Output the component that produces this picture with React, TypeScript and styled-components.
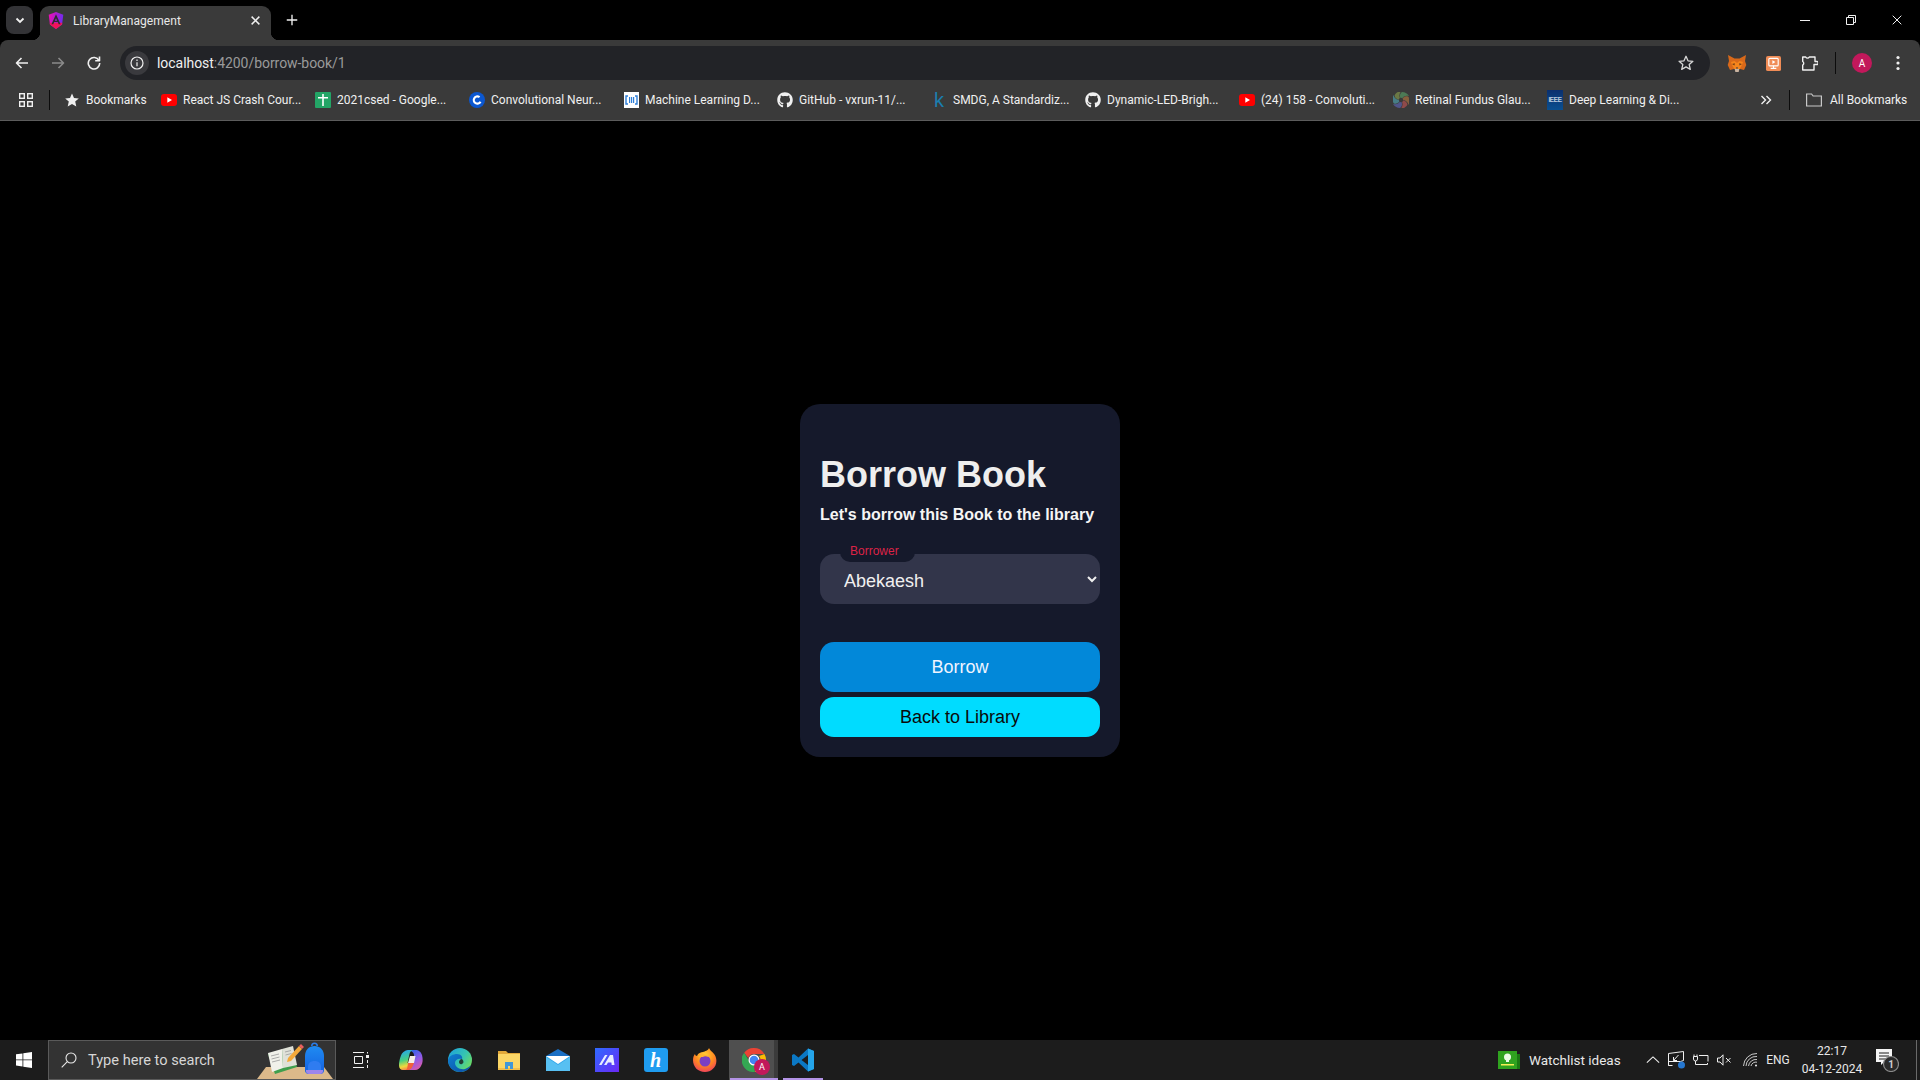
import React from "react";
import styled, { createGlobalStyle } from "styled-components";
import { FaGithub } from "react-icons/fa";

const Global = createGlobalStyle`
  html, body { margin: 0; padding: 0; background: #000; }
  * { box-sizing: border-box; }
`;

const uiFont = `Roboto, "Noto Sans", sans-serif`;
const pageFont = `"Liberation Sans", Arial, sans-serif`;

const Page = styled.div`
  width: 1920px;
  height: 1080px;
  display: flex;
  flex-direction: column;
  background: #000;
  overflow: hidden;
  font-family: ${uiFont};
`;

const TabStrip = styled.div`
  height: 40px;
  display: flex;
  align-items: flex-end;
  padding-left: 6px;
`;
const TabSearch = styled.div`
  width: 27px;
  height: 28px;
  margin-bottom: 6px;
  border-radius: 8px;
  background: #333336;
  display: flex;
  align-items: center;
  justify-content: center;
`;
const Tab = styled.div`
  position: relative;
  width: 231px;
  height: 34px;
  margin-left: 7px;
  padding: 0 11px 5px 8px;
  background: #3a3a3a;
  border-radius: 9px 9px 0 0;
  display: flex;
  align-items: center;
  gap: 9px;
  color: #e8e8e8;
  font-size: 12px;
  &::before, &::after {
    content: "";
    position: absolute;
    bottom: 0;
    width: 8px;
    height: 8px;
  }
  &::before { left: -8px; background: radial-gradient(circle at 0 0, transparent 8px, #3a3a3a 8.5px); }
  &::after { right: -8px; background: radial-gradient(circle at 100% 0, transparent 8px, #3a3a3a 8.5px); }
`;
const TabTitle = styled.span`
  flex: 1;
  white-space: nowrap;
  letter-spacing: 0.05px;
`;
const NewTab = styled.div`
  width: 28px;
  height: 34px;
  margin-left: 7px;
  display: flex;
  align-items: center;
  justify-content: center;
  padding-bottom: 6px;
`;
const WindowControls = styled.div`
  margin-left: auto;
  align-self: flex-start;
  display: flex;
`;
const WindowButton = styled.div`
  width: 46px;
  height: 40px;
  display: flex;
  align-items: center;
  justify-content: center;
`;

const Toolbar = styled.div`
  height: 40px;
  padding: 6px 4px 0 4px;
  background: #3a3a3a;
  border-radius: 8px 8px 0 0;
  display: flex;
  align-items: flex-start;
`;
const ToolSlot = styled.div`
  width: 36px;
  height: 34px;
  display: flex;
  align-items: center;
  justify-content: center;
  flex: none;
`;
const Omnibox = styled.div`
  flex: 1;
  height: 34px;
  margin: 0 9px 0 8px;
  padding: 0 16px 0 5px;
  background: #222327;
  border-radius: 17px;
  display: flex;
  align-items: center;
`;
const InfoChip = styled.div`
  width: 24px;
  height: 24px;
  border-radius: 50%;
  background: #3a3a3e;
  display: flex;
  align-items: center;
  justify-content: center;
`;
const Url = styled.div`
  margin-left: 8px;
  font-size: 14px;
  color: #9a9a9a;
  flex: 1;
  letter-spacing: -0.05px;
  b { font-weight: 400; color: #f0f0f0; }
`;
const ToolDivider = styled.div`
  width: 1px;
  height: 22px;
  margin: 6px 8px 0 8px;
  background: #0c0c0c;
  flex: none;
`;

const BookmarksBar = styled.div`
  height: 41px;
  padding: 0 0 1px 14px;
  background: #3a3a3a;
  border-bottom: 1px solid #5c5c5c;
  display: flex;
  align-items: center;
  color: #f0f0f0;
  font-size: 12px;
`;
const AppsSlot = styled.div`
  width: 24px;
  display: flex;
  justify-content: center;
`;
const BarDivider = styled.div<{ $left: number; $right: number }>`
  width: 1px;
  height: 20px;
  background: #0c0c0c;
  margin: 0 ${(p) => p.$right}px 0 ${(p) => p.$left}px;
  flex: none;
`;
const Bookmark = styled.div<{ $width: number }>`
  width: ${(p) => p.$width}px;
  display: flex;
  align-items: center;
  gap: 6px;
  white-space: nowrap;
  flex: none;
`;
const BookmarkIcon = styled.div`
  width: 16px;
  height: 16px;
  display: flex;
  align-items: center;
  justify-content: center;
  flex: none;
`;
const Overflow = styled.div`
  margin-left: auto;
  width: 20px;
  display: flex;
  justify-content: center;
`;
const AllBookmarks = styled.div`
  width: 114px;
  display: flex;
  align-items: center;
  gap: 8px;
  white-space: nowrap;
`;

const Main = styled.main`
  flex: 1;
  display: flex;
  align-items: center;
  justify-content: center;
`;
const Card = styled.section`
  width: 320px;
  padding: 50px 20px 20px;
  border-radius: 20px;
  background: #15192b;
  font-family: ${pageFont};
  display: flex;
  flex-direction: column;
`;
const Title = styled.h1`
  margin: 0 0 10px;
  font-size: 36px;
  font-weight: 700;
  color: #eeeeee;
`;
const Subtitle = styled.p`
  margin: 0 0 30px;
  font-size: 16px;
  line-height: 18px;
  font-weight: 700;
  color: #f5f5f5;
  white-space: nowrap;
`;
const Field = styled.div`
  position: relative;
  margin-bottom: 38px;
`;
const FieldLabel = styled.label`
  position: absolute;
  left: 20px;
  top: -10px;
  width: 75px;
  height: 18px;
  padding-left: 10px;
  border-radius: 0 0 10px 10px;
  background: #15192b;
  color: #dc2347;
  font-size: 12px;
  line-height: 14px;
`;
const Select = styled.select`
  display: block;
  width: 100%;
  height: 50px;
  padding: 4px 5px 0 20px;
  border: none;
  outline: none;
  border-radius: 14px;
  background: #32354a;
  color: #f0f0f0;
  font-family: ${pageFont};
  font-size: 18px;
`;
const ActionButton = styled.button<{ $bg: string; $fg: string; $height: number }>`
  display: block;
  width: 100%;
  height: ${(p) => p.$height}px;
  border: none;
  border-radius: 14px;
  background: ${(p) => p.$bg};
  color: ${(p) => p.$fg};
  font-family: ${pageFont};
  font-size: 18px;
  & + & { margin-top: 5px; }
`;

const Taskbar = styled.footer`
  height: 40px;
  background: #1c1c1c;
  display: flex;
  align-items: stretch;
  flex: none;
`;
const TaskSlot = styled.div<{ $width: number }>`
  position: relative;
  width: ${(p) => p.$width}px;
  display: flex;
  align-items: center;
  justify-content: center;
  flex: none;
`;
const ActiveSlot = styled(TaskSlot)`
  background: linear-gradient(to right, #4f4f4f 45px, #3b3b3b 45px);
  &::after {
    content: "";
    position: absolute;
    left: 1px;
    right: 0;
    bottom: 0;
    height: 2px;
    background: #b393e6;
  }
`;
const RunningSlot = styled(TaskSlot)`
  &::after {
    content: "";
    position: absolute;
    left: 5px;
    right: 4px;
    bottom: 0;
    height: 2px;
    background: #b393e6;
  }
`;
const SearchBox = styled.div`
  width: 288px;
  background: #333;
  border: 1px solid #5a5a5a;
  border-bottom-width: 1px;
  display: flex;
  align-items: center;
  padding-left: 12px;
  color: #d6d6d6;
  font-size: 14.6px;
  overflow: hidden;
`;
const SearchText = styled.span`
  margin-left: 11px;
  white-space: nowrap;
`;
const SearchArt = styled.div`
  margin-left: auto;
  display: flex;
  align-self: flex-end;
`;
const Tray = styled.div`
  margin-left: auto;
  display: flex;
  align-items: stretch;
  color: #e8e8e8;
`;
const Watchlist = styled.div`
  width: 123px;
  margin-right: 20px;
  display: flex;
  align-items: center;
  gap: 9px;
  font-size: 13.5px;
  white-space: nowrap;
`;
const LangText = styled.span`
  font-size: 12px;
`;
const Clock = styled.div`
  font-size: 12px;
  line-height: 18px;
  text-align: center;
  white-space: nowrap;
`;
const ShowDesktop = styled.div`
  width: 4px;
  margin: 0 0 0 16px;
  border-left: 1px solid #6a6a6a;
`;

const Chevron = () => (
  <svg width="12" height="12" viewBox="0 0 12 12" fill="none" stroke="#f0f0f0" strokeWidth="1.8">
    <path d="M2.5 4.5 6 8l3.5-3.500" />
  </svg>
);
const AngularIcon = () => (
  <svg width="16" height="17" viewBox="0 0 16 18">
    <defs>
      <linearGradient id="ang" x1="0" y1="0.1" x2="1" y2="0.3">
        <stop offset="0" stopColor="#f00fb0" />
        <stop offset="1" stopColor="#6f2bf0" />
      </linearGradient>
    </defs>
    <path fill="url(#ang)" d="M8 0 .3 3 1.600 13.200 8 18l6.400-4.800L15.700 3z" />
    <path fill="#f0135a" d="M1.400 11.500h13.200l-.2 1.700L8 18l-6.400-4.800z" />
    <path fill="#2c2c2e" d="M8 2.500 3.200 13h1.900l1-2.400h3.800l1 2.400h1.900zM8 6.500l1.200 2.700H6.800z" />
  </svg>
);
const XIcon = ({ size = 10, w = 1.6 }: { size?: number; w?: number }) => (
  <svg width={size} height={size} viewBox="0 0 10 10" stroke="#f0f0f0" strokeWidth={w} fill="none">
    <path d="M.7.7l8.600 8.600M9.300.7.700 9.300" />
  </svg>
);
const Stroke = ({ d, color = "#f0f0f0", size = 16, w = 1.6 }: { d: string; color?: string; size?: number; w?: number }) => (
  <svg width={size} height={size} viewBox="0 0 16 16" fill="none" stroke={color} strokeWidth={w} strokeLinejoin="round">
    <path d={d} />
  </svg>
);
const YouTube = () => (
  <svg width="16" height="12" viewBox="0 0 16 12">
    <rect width="16" height="12" rx="3" fill="#f00" />
    <path d="M6.300 3.300v5.400L11 6z" fill="#fff" />
  </svg>
);
const Sheets = () => (
  <svg width="16" height="16" viewBox="0 0 16 16">
    <rect width="16" height="16" rx="1" fill="#23a566" />
    <path d="M7.200 2h1.600v3H13v1.600H8.800V14H7.200V6.600H3V5h4.200z" fill="#fff" />
  </svg>
);
const Coursera = () => (
  <svg width="16" height="16" viewBox="0 0 16 16">
    <circle cx="8" cy="8" r="8" fill="#0b57d0" />
    <circle cx="8.400" cy="8" r="3.600" fill="none" stroke="#fff" strokeWidth="2.200" strokeDasharray="17 6" transform="rotate(30 8.400 8)" />
  </svg>
);
const Bars = () => (
  <svg width="15" height="16" viewBox="0 0 15 16">
    <rect width="15" height="16" fill="#fff" />
    <path d="M4 4H2v8h2" fill="none" stroke="#2f7fd8" strokeWidth="1.400" />
    <path d="M11 4h2v8h-2" fill="none" stroke="#2f7fd8" strokeWidth="1.400" />
    <path d="M5 5h1.200v6H5zM7 5h1.200v6H7zM9 5h1.200v6H9z" fill="#2f7fd8" />
  </svg>
);
const KaggleK = styled.span`
  font-family: ${pageFont};
  font-size: 20px;
  line-height: 16px;
  color: #1a7eb0;
  font-weight: 400;
`;
const Retinal = () => (
  <svg width="16" height="16" viewBox="0 0 16 16">
    {["#4c7a55", "#86603d", "#8f4a4a", "#50558a", "#477d86", "#6a7845"].map((c, i) => (
      <path key={c} fill={c} d="M8 8C7 5 6 2 9 0c3 0 6 2 7 4-3-1-6 0-8 4z" transform={`rotate(${i * 60} 8 8)`} />
    ))}
    <circle cx="8" cy="8" r="2.200" fill="#3a3a3a" />
  </svg>
);
const IeeeBox = styled.div`
  width: 16px;
  height: 20px;
  background: linear-gradient(#0a2f6e, #0a4f90);
  color: #fff;
  font-family: ${pageFont};
  font-size: 6.500px;
  letter-spacing: -0.4px;
  display: flex;
  align-items: center;
  justify-content: center;
`;
const Fox = () => (
  <svg width="20" height="19" viewBox="0 0 20 19">
    <path fill="#d8691a" d="M1 1l6.500 3.500h5L19 1l-1 6 1.300 4-2.300 5-4-1H7l-4 1-2.300-5L2 7z" />
    <path fill="#f6851b" d="M4 8l3.500-1L10 9l2.500-2L16 8l-1.500 4-2 3h-5l-2-3z" />
    <path fill="#6b3a16" d="M5 10l2.800-.800L7.500 11.500zM15 10l-2.800-.800.300 2.300z" />
    <path fill="#c9b3a0" d="M7.700 15h4.600l-.6 3H8.300z" />
    <path fill="#233447" d="M8.800 13.500h2.400L10 15z" />
  </svg>
);
const OrangeExt = () => (
  <svg width="15" height="15" viewBox="0 0 16 16">
    <rect width="16" height="16" rx="2" fill="#f08c56" />
    <rect x="3" y="2.500" width="10" height="8" rx="1" fill="none" stroke="#fff" strokeWidth="1.200" />
    <path d="M6.800 4.500v4L10 6.500z" fill="#fff" />
    <path d="M8 10.500V13M5 13.200h6" stroke="#fff" strokeWidth="1.200" />
  </svg>
);
const AvatarCircle = styled.div`
  width: 20px;
  height: 20px;
  border-radius: 50%;
  background: #c2185b;
  color: #fff;
  font-size: 10px;
  display: flex;
  align-items: center;
  justify-content: center;
`;
const Dots = () => (
  <svg width="4" height="16" viewBox="0 0 4 16" fill="#f0f0f0">
    <circle cx="2" cy="2.500" r="1.600" />
    <circle cx="2" cy="8" r="1.600" />
    <circle cx="2" cy="13.500" r="1.600" />
  </svg>
);

const WinLogo = () => (
  <svg width="16" height="16" viewBox="0 0 16 16" fill="#fff">
    <path d="M0 2.300 6.500 1.400V7.500H0zM7.300 1.300 16 0V7.500H7.300zM0 8.300H6.500V14.500L0 13.600zM7.300 8.300H16V16L7.300 14.700z" />
  </svg>
);
const Magnifier = () => (
  <svg width="16" height="16" viewBox="0 0 16 16" fill="none" stroke="#e8e8e8" strokeWidth="1.100">
    <circle cx="10" cy="6" r="5" />
    <path d="M6.300 9.700.7 15.300" />
  </svg>
);
const DeskArt = () => (
  <svg width="80" height="38" viewBox="0 0 80 38">
    <defs>
      <linearGradient id="bag" x1="0" y1="0" x2="0" y2="1">
        <stop offset="0" stopColor="#1f8cf2" />
        <stop offset="1" stopColor="#1560e0" />
      </linearGradient>
    </defs>
    <path d="M2 38l9-12h58l9 12z" fill="#dcb98a" />
    <path d="M13 13 37 6l5 20-22 7z" fill="#3f9f4d" />
    <path d="M13 12 27 8l1 19-11 4z" fill="#f1f1ea" />
    <path d="M27 8l11-3 4 19-14 3z" fill="#dfe1d8" />
    <path d="M16 15l8-2M16.500 18l8-2M17 21l8-2M30 11l6-1.500M30.500 14l6-1.500" stroke="#9a9a9a" strokeWidth="0.800" />
    <path d="M33 17 44 5l3 3-11 12-4 1z" fill="#f3a93a" />
    <path d="M44 5l2-2 3 3-2 2z" fill="#ea5f5f" />
    <path d="M56 5a3.500 3.500 0 0 1 7 0h-1.500a2 2 0 0 0-4 0z" fill="#2b7de9" />
    <path d="M50 15c0-6 4-10 9.500-10S69 9 69 15v14a4 4 0 0 1-4 4H54a4 4 0 0 1-4-4z" fill="url(#bag)" />
    <path d="M53 26c0-4 2.500-6 6.500-6s6.500 2 6.500 6v5a2 2 0 0 1-2 2h-9a2 2 0 0 1-2-2z" fill="#2f7cf0" />
    <path d="M51 29h17v1a3 3 0 0 1-3 3H54a3 3 0 0 1-3-3z" fill="#9d86ec" />
  </svg>
);
const TaskView = () => (
  <svg width="16" height="16" viewBox="0 0 16 16" fill="none" stroke="#f0f0f0" strokeWidth="1">
    <path d="M0 .5h11M0 15.500h11M1.500 4.500h8v7h-8z" />
    <rect x="13" y="3" width="3" height="3" fill="#f0f0f0" stroke="none" />
    <path d="M14.500 0v1.500M14.500 8v3M14.500 13v3" />
  </svg>
);
const Copilot = () => (
  <svg width="24" height="20" viewBox="0 0 24 20">
    <defs>
      <linearGradient id="cpA" x1="0.3" y1="0" x2="0.5" y2="1">
        <stop offset="0" stopColor="#27a6ef" />
        <stop offset="0.500" stopColor="#46d080" />
        <stop offset="0.800" stopColor="#f0d83c" />
        <stop offset="1" stopColor="#f2804c" />
      </linearGradient>
      <linearGradient id="cpB" x1="0.300" y1="0" x2="0.800" y2="1">
        <stop offset="0" stopColor="#2f62e8" />
        <stop offset="0.500" stopColor="#8f5be8" />
        <stop offset="1" stopColor="#e85aa0" />
      </linearGradient>
    </defs>
    <path fill="url(#cpB)" d="M9 0h7c4 0 6 2 7 5 1 4 1 8-1 11-1 2-3 4-6 4h-6l3-8 2-6C15.500 3 13 1 9 0z" />
    <path fill="url(#cpA)" d="M6 1C7 .3 8.500 0 10 0h4c-2 .5-3 2-3.500 4L8.500 13H14l-1 3c-1 2.500-3 4-5 4H4c-2.500 0-4-2-4-4.500C0 11 1.500 6 3 3.500 3.800 2.300 5 1.500 6 1z" />
    <path fill="#f4efe6" d="M11 6h5.500L15 13H9z" />
    <path fill="#f2603c" d="M9 13h6l-1.500 3.500C12.500 18.500 11 20 9 20H7c1.500-1 1.500-4 2-7z" />
  </svg>
);
const Edge = () => (
  <svg width="24" height="24" viewBox="0 0 24 24">
    <defs>
      <linearGradient id="edgeA" x1="0" y1="0" x2="1" y2="0.700">
        <stop offset="0" stopColor="#1b9de2" />
        <stop offset="0.600" stopColor="#36c5b0" />
        <stop offset="1" stopColor="#6fdc5e" />
      </linearGradient>
      <linearGradient id="edgeB" x1="0" y1="0" x2="1" y2="1">
        <stop offset="0" stopColor="#0f7fd0" />
        <stop offset="1" stopColor="#0b4fa6" />
      </linearGradient>
    </defs>
    <circle cx="12" cy="12" r="12" fill="url(#edgeA)" />
    <path fill="url(#edgeB)" d="M0 12C1 8 5 6 9 6c4 0 6 3 5 5-4-1-7 1-7 4 0 4 5 7 10 6 3-1 5-3 6-4-2 5-6 7-11 7C5 24 0 19 0 12z" />
    <path fill="#1c1c1c" d="M14 11c2 2 2 4 0 5s-3-1-3-2 1-3 3-3z" opacity="0.800" />
  </svg>
);
const FolderIcon = () => (
  <svg width="22" height="20" viewBox="0 0 22 20">
    <path fill="#e2a93a" d="M0 1h8l2 2h12v4H0z" />
    <path fill="#fbd666" d="M0 4h22v16H0z" />
    <path fill="#f2bd4a" d="M0 18h22v2H0z" />
    <path fill="#4197d8" d="M7 12h8v7h-3v-3h-2v3H7z" />
  </svg>
);
const MailIcon = () => (
  <svg width="24" height="22" viewBox="0 0 24 22">
    <path fill="#1a6fc4" d="M12 0 24 7v2H0V7z" />
    <rect y="7" width="24" height="15" fill="#30a6ea" />
    <path fill="#fff" d="M0 7h24L12 15z" />
    <path fill="#58c0f2" d="M0 8 12 16 24 8v14H0z" />
  </svg>
);
const MaIcon = () => (
  <svg width="24" height="24" viewBox="0 0 24 24">
    <defs>
      <linearGradient id="maG" x1="0" y1="0" x2="1" y2="1">
        <stop offset="0" stopColor="#2f6bff" />
        <stop offset="1" stopColor="#6a28f5" />
      </linearGradient>
    </defs>
    <rect width="24" height="24" fill="url(#maG)" />
    <path fill="#e8edff" d="M4 17 10 7h2.500L6.500 17zM9 17 15 7h3l1.500 10h-2.800l-.3-2.500H13L11.500 17z" />
  </svg>
);
const HBox = styled.div`
  width: 24px;
  height: 24px;
  border-radius: 3px;
  background: #1f9cf0;
  color: #fff;
  font-family: "Liberation Serif", serif;
  font-style: italic;
  font-weight: 700;
  font-size: 20px;
  display: flex;
  align-items: center;
  justify-content: center;
`;
const Firefox = () => (
  <svg width="24" height="24" viewBox="0 0 24 24">
    <defs>
      <radialGradient id="ffG" cx="0.500" cy="0.300" r="0.800">
        <stop offset="0" stopColor="#ffd43a" />
        <stop offset="0.500" stopColor="#ff8a1f" />
        <stop offset="1" stopColor="#ec2f6a" />
      </radialGradient>
    </defs>
    <path fill="url(#ffG)" d="M16 0c1 3 6 5 7 10 2 8-4 14-11 14S0 19 0 12c0-3 1-5 2-6 0 1 1 2 2 2 1-3 4-4 6-4 2-1 5-1 6-4z" />
    <circle cx="12" cy="13" r="5.500" fill="#7b3fc4" />
    <path fill="#ffb52e" d="M5 9c3-4 9-3 11 0-3-1-5-1-6 0z" />
  </svg>
);
const ChromeLogo = () => (
  <svg width="24" height="24" viewBox="0 0 24 24">
    <path fill="#ea4335" d="M12 0a12 12 0 0 1 10.400 6H12a6 6 0 0 0-5.700 4L2.200 4.700A12 12 0 0 1 12 0z" />
    <path fill="#fbbc04" d="M22.400 6a12 12 0 0 1-9.900 18l4.600-8A6 6 0 0 0 17 8z" />
    <path fill="#34a853" d="M2.200 4.700 7 13a6 6 0 0 0 6.500 4l-1 7A12 12 0 0 1 2.200 4.700z" />
    <circle cx="12" cy="12" r="5.500" fill="#fff" />
    <circle cx="12" cy="12" r="4.300" fill="#4285f4" />
  </svg>
);
const ChromeBadge = styled.div`
  position: absolute;
  left: 25px;
  top: 19px;
  width: 16px;
  height: 16px;
  border-radius: 50%;
  background: #c2185b;
  color: #fff;
  font-size: 9px;
  display: flex;
  align-items: center;
  justify-content: center;
`;
const VsCode = () => (
  <svg width="24" height="24" viewBox="0 0 24 24">
    <path fill="#0b78c4" d="M17 .5 7.500 9.600 3 6 1 7v10l2 1 4.500-3.600L17 23.500l6-2.500V3zM17 7v10l-6.500-5z" />
    <path fill="#25a5ea" d="M17 .5 23 3v18l-6 2.500z" />
  </svg>
);
const GreenIdea = () => (
  <svg width="22" height="18" viewBox="0 0 22 18">
    <rect x="15" y="3" width="7" height="15" fill="#1a7a12" />
    <rect width="19" height="18" fill="#2fa31f" />
    <circle cx="9.500" cy="6" r="3.500" fill="#eafbe6" />
    <rect x="8" y="9" width="3" height="2" fill="#eafbe6" />
    <rect x="3" y="13" width="13" height="1.500" fill="#f6ef55" />
  </svg>
);
const TrayMonitor = () => (
  <svg width="18" height="18" viewBox="0 0 18 18" fill="none" stroke="#f0f0f0" strokeWidth="1">
    <path d="M.5 2.500 15.500.5v9l-3 1H.5v4h4" />
    <path d="M.5 2.500v12M10.500 4 5.500 9.500M5.500 6v3.500H9" />
    <circle cx="13.500" cy="14" r="3.500" fill="#2577d0" stroke="none" />
  </svg>
);
const TrayPlug = () => (
  <svg width="16" height="12" viewBox="0 0 16 12" fill="none" stroke="#f0f0f0" strokeWidth="1">
    <path d="M1 .5v2M4 .5v2M.5 2.500h4V5a2 2 0 0 1-4 0zM2.500 7v3.500H14.500V9M6 1.500h9v6" />
  </svg>
);
const TraySpeaker = () => (
  <svg width="15" height="12" viewBox="0 0 15 12" fill="none" stroke="#f0f0f0" strokeWidth="1">
    <path d="M.5 4h2.500L6 .8v10.400L3 8H.5zM9 4l4.500 4.500M13.500 4 9 8.500" />
  </svg>
);
const TrayWifi = () => (
  <svg width="16" height="14" viewBox="0 0 16 14" fill="none" stroke="#c8c8c8" strokeWidth="1">
    <path d="M.5 13A13 13 0 0 1 14 .5M3 13a10 10 0 0 1 11-9.500M5.500 13A7.500 7.500 0 0 1 14 6.500M8 13a5 5 0 0 1 6-3.800" />
    <circle cx="13" cy="12.500" r="1" fill="#f0f0f0" stroke="none" />
  </svg>
);
const TrayNote = () => (
  <svg width="24" height="24" viewBox="0 0 24 24">
    <path fill="#f5f5f5" d="M1 1h16v13h-8l-3 3v-3H1z" />
    <path d="M4 5h10M4 8h10M4 11h7" stroke="#1c1c1c" strokeWidth="1" />
    <circle cx="16" cy="16" r="7.500" fill="#2a2a2a" stroke="#8a8a8a" strokeWidth="1.200" />
    <text x="16" y="19.500" textAnchor="middle" fontSize="10" fontWeight="700" fill="#cfcfcf" fontFamily="Roboto, sans-serif">1</text>
  </svg>
);
const BookmarkStar = () => (
  <svg width="14" height="14" viewBox="0 0 14 14" fill="#f0f0f0">
    <path d="M7 .5 9 5l4.800.4-3.600 3.200 1.100 4.800L7 10.900l-4.300 2.500 1.100-4.800L.2 5.400 5 5z" />
  </svg>
);

const bookmarks: { icon: React.ReactNode; label: string; width?: number }[] = [
  { icon: <BookmarkStar />, label: "Bookmarks", width: 97 },
  { icon: <YouTube />, label: "React JS Crash Cour..." },
  { icon: <Sheets />, label: "2021csed - Google..." },
  { icon: <Coursera />, label: "Convolutional Neur..." },
  { icon: <Bars />, label: "Machine Learning D..." },
  { icon: <FaGithub size={16} color="#f0f0f0" />, label: "GitHub - vxrun-11/..." },
  { icon: <KaggleK>k</KaggleK>, label: "SMDG, A Standardiz..." },
  { icon: <FaGithub size={16} color="#f0f0f0" />, label: "Dynamic-LED-Brigh..." },
  { icon: <YouTube />, label: "(24) 158 - Convoluti..." },
  { icon: <Retinal />, label: "Retinal Fundus Glau..." },
  { icon: <IeeeBox>IEEE</IeeeBox>, label: "Deep Learning & Di..." },
];

export default function App() {
  return (
    <Page>
      <Global />
      <TabStrip>
        <TabSearch>
          <Chevron />
        </TabSearch>
        <Tab>
          <AngularIcon />
          <TabTitle>LibraryManagement</TabTitle>
          <XIcon size={9} />
        </Tab>
        <NewTab>
          <Stroke size={12} w={1.8} d="M8 1v14M1 8h14" />
        </NewTab>
        <WindowControls>
          <WindowButton>
            <svg width="10" height="10" viewBox="0 0 10 10" fill="none" stroke="#f0f0f0" strokeWidth="1">
              <path d="M0 5.500h10" />
            </svg>
          </WindowButton>
          <WindowButton>
            <svg width="10" height="10" viewBox="0 0 10 10" fill="none" stroke="#f0f0f0" strokeWidth="1">
              <path d="M.5 2.500h7v7h-7zM2.500 2.500v-2h7v7h-2" />
            </svg>
          </WindowButton>
          <WindowButton>
            <XIcon size={10} w={1} />
          </WindowButton>
        </WindowControls>
      </TabStrip>

      <Toolbar>
        <ToolSlot>
          <Stroke w={1.6} d="M14 8H2.500M7.500 3 2.500 8l5 5" />
        </ToolSlot>
        <ToolSlot>
          <Stroke color="#8a8a8a" w={1.6} d="M2 8h11.500M8.500 3l5 5-5 5" />
        </ToolSlot>
        <ToolSlot>
          <svg width="14" height="14" viewBox="0 0 14 14" fill="none" stroke="#f0f0f0" strokeWidth="1.600">
            <path d="M12 4.500A5.700 5.700 0 1 0 12.700 7" />
            <path d="M12.500 .5v4.300H8.200" strokeLinejoin="round" />
          </svg>
        </ToolSlot>
        <Omnibox>
          <InfoChip>
            <svg width="14" height="14" viewBox="0 0 14 14" fill="none" stroke="#f0f0f0" strokeWidth="1.200">
              <circle cx="7" cy="7" r="6" />
              <path d="M7 6.200v4M7 3.600v1.300" />
            </svg>
          </InfoChip>
          <Url>
            <b>localhost</b>:4200/borrow-book/1
          </Url>
          <svg width="16" height="16" viewBox="0 0 16 16" fill="none" stroke="#d8d8d8" strokeWidth="1.300" strokeLinejoin="round">
            <path d="M8 1.300 10 5.800l4.900.5-3.700 3.300 1.100 4.800L8 11.900l-4.300 2.500 1.100-4.800L1.100 6.300 6 5.800z" />
          </svg>
        </Omnibox>
        <ToolSlot>
          <Fox />
        </ToolSlot>
        <ToolSlot>
          <OrangeExt />
        </ToolSlot>
        <ToolSlot>
          <svg width="17" height="15" viewBox="0 0 17 15" fill="none" stroke="#f0f0f0" strokeWidth="1.400" strokeLinejoin="round">
            <path d="M1.700 1h3a2 2 0 0 0 3.600 0h5.700v4.500h1.800a1.200 1.200 0 0 1 0 3H13V14H1.700V9a2 2 0 0 0 0-3.500z" />
          </svg>
        </ToolSlot>
        <ToolDivider />
        <ToolSlot>
          <AvatarCircle>A</AvatarCircle>
        </ToolSlot>
        <ToolSlot>
          <Dots />
        </ToolSlot>
      </Toolbar>

      <BookmarksBar>
        <AppsSlot>
          <svg width="14" height="14" viewBox="0 0 14 14" fill="none" stroke="#f0f0f0" strokeWidth="1.400">
            <rect x=".7" y=".7" width="4.600" height="4.600" />
            <rect x="8.700" y=".7" width="4.600" height="4.600" />
            <rect x=".7" y="8.700" width="4.600" height="4.600" />
            <rect x="8.700" y="8.700" width="4.600" height="4.600" />
          </svg>
        </AppsSlot>
        <BarDivider $left={11} $right={14} />
        {bookmarks.map((b) => (
          <Bookmark key={b.label} $width={b.width ?? 154}>
            <BookmarkIcon>{b.icon}</BookmarkIcon>
            <span>{b.label}</span>
          </Bookmark>
        ))}
        <Overflow>
          <svg width="12" height="12" viewBox="0 0 12 12" fill="none" stroke="#f0f0f0" strokeWidth="1.400">
            <path d="M1.500 2 5.500 6l-4 4M6.500 2l4 4-4 4" />
          </svg>
        </Overflow>
        <BarDivider $left={13} $right={16} />
        <AllBookmarks>
          <svg width="16" height="14" viewBox="0 0 16 14" fill="none" stroke="#c8c8c8" strokeWidth="1.200">
            <path d="M.6 1h5l1.500 2h8.300v10H.6z" />
          </svg>
          All Bookmarks
        </AllBookmarks>
      </BookmarksBar>

      <Main>
        <Card>
          <Title>Borrow Book</Title>
          <Subtitle>Let's borrow this Book to the library</Subtitle>
          <Field>
            <FieldLabel htmlFor="borrower">Borrower</FieldLabel>
            <Select id="borrower" defaultValue="Abekaesh">
              <option>Abekaesh</option>
            </Select>
          </Field>
          <ActionButton $bg="#0288d9" $fg="#f0f4ff" $height={50}>
            Borrow
          </ActionButton>
          <ActionButton $bg="#00dcff" $fg="#0a0a0a" $height={40}>
            Back to Library
          </ActionButton>
        </Card>
      </Main>

      <Taskbar>
        <TaskSlot $width={48}>
          <WinLogo />
        </TaskSlot>
        <SearchBox>
          <Magnifier />
          <SearchText>Type here to search</SearchText>
          <SearchArt>
            <DeskArt />
          </SearchArt>
        </SearchBox>
        <TaskSlot $width={49}>
          <TaskView />
        </TaskSlot>
        <TaskSlot $width={51}>
          <Copilot />
        </TaskSlot>
        <TaskSlot $width={48}>
          <Edge />
        </TaskSlot>
        <TaskSlot $width={49}>
          <FolderIcon />
        </TaskSlot>
        <TaskSlot $width={49}>
          <MailIcon />
        </TaskSlot>
        <TaskSlot $width={49}>
          <MaIcon />
        </TaskSlot>
        <TaskSlot $width={49}>
          <HBox>h</HBox>
        </TaskSlot>
        <TaskSlot $width={49}>
          <Firefox />
        </TaskSlot>
        <ActiveSlot $width={49}>
          <ChromeLogo />
          <ChromeBadge>A</ChromeBadge>
        </ActiveSlot>
        <RunningSlot $width={49}>
          <VsCode />
        </RunningSlot>
        <Tray>
          <Watchlist>
            <GreenIdea />
            Watchlist ideas
          </Watchlist>
          <TaskSlot $width={24}>
            <Stroke size={14} w={1.2} d="M1 11 8 4.500 15 11" />
          </TaskSlot>
          <TaskSlot $width={24}>
            <TrayMonitor />
          </TaskSlot>
          <TaskSlot $width={24}>
            <TrayPlug />
          </TaskSlot>
          <TaskSlot $width={23}>
            <TraySpeaker />
          </TaskSlot>
          <TaskSlot $width={30}>
            <TrayWifi />
          </TaskSlot>
          <TaskSlot $width={24}>
            <LangText>ENG</LangText>
          </TaskSlot>
          <TaskSlot $width={84}>
            <Clock>
              22:17
              <br />
              04-12-2024
            </Clock>
          </TaskSlot>
          <TaskSlot $width={26}>
            <TrayNote />
          </TaskSlot>
          <ShowDesktop />
        </Tray>
      </Taskbar>
    </Page>
  );
}
